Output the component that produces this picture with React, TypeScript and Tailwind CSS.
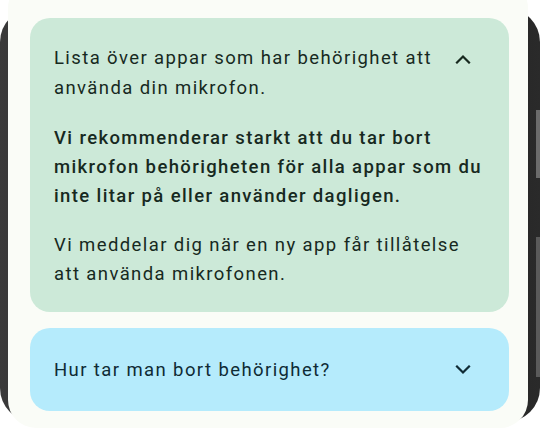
function Chevron({ up }: { up?: boolean }) {
  return (
    <svg width="16" height="10" viewBox="0 0 16 10" fill="none" stroke="currentColor" strokeWidth={2.2} strokeLinecap="square" className="shrink-0">
      {up ? <path d="M2 8.5 8 2.5l6 6" /> : <path d="M2 1.5l6 6 6-6" />}
    </svg>
  );
}

export default function App() {
  return (
    <div className="relative h-[431px] w-[540px] overflow-hidden bg-white font-['Roboto',sans-serif]">
      {/* Phone frame behind the sheet */}
      <div className="absolute left-0 top-[8px] h-[414px] w-[540px] rounded-[34px] bg-gradient-to-r from-[#3a3a3a] via-[#111] to-[#2a2a2a]" />
      <div className="absolute left-[536px] top-[110px] h-[68px] w-[4px] bg-[#6b6b6b]" />
      <div className="absolute left-[536px] top-[237px] h-[140px] w-[4px] bg-[#5a5a5a]" />

      {/* Sheet */}
      <div className="relative ml-[8px] mt-[-20px] flex h-[448px] w-[520px] flex-col gap-[16px] rounded-[28px] bg-[#fafcf7] pl-[22px] pr-[19px] pt-[38px]">
        <div className="flex flex-col rounded-[20px] bg-[#cce9d8] pb-[23px] pl-[24px] pr-[24px] pt-[25px] text-[#17291f]">
          <div className="flex items-start justify-between">
            <p className="w-[400px] text-[18.5px] leading-[30px] tracking-[1.4px]">
              Lista över appar som har behörighet att använda din mikrofon.
            </p>
            <div className="mr-[14px] mt-[11px]">
              <Chevron up />
            </div>
          </div>
          <p className="mt-[21px] text-[18.5px] font-medium leading-[29px] tracking-[1.38px]">
            Vi rekommenderar starkt att du tar bort mikrofon behörigheten för alla appar som du inte litar på eller använder dagligen.
          </p>
          <p className="mt-[20px] pr-[20px] text-[18.5px] leading-[29px] tracking-[1.4px]">
            Vi meddelar dig när en ny app får tillåtelse att använda mikrofonen.
          </p>
        </div>

        <div className="flex h-[83px] items-center justify-between rounded-[20px] bg-[#b5ebfc] pl-[24px] pr-[38px] text-[#0f2b35]">
          <p className="text-[18.5px] leading-[30px] tracking-[1.4px]">Hur tar man bort behörighet?</p>
          <Chevron />
        </div>
      </div>
    </div>
  );
}
